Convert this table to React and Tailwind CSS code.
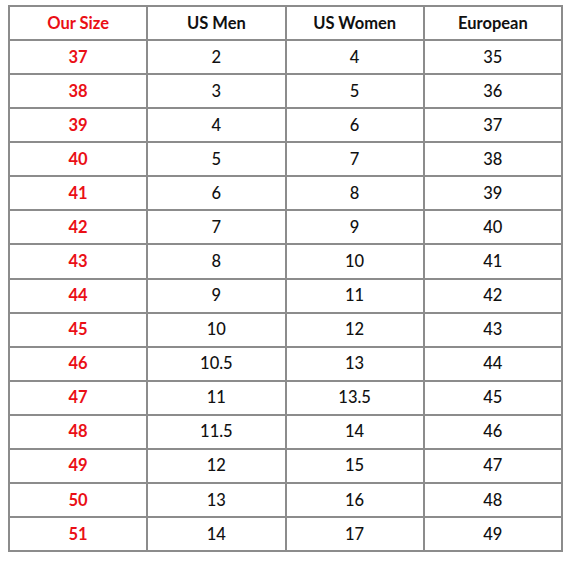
import React from 'react';

const rows = [
    ['37', '2', '4', '35'],
    ['38', '3', '5', '36'],
    ['39', '4', '6', '37'],
    ['40', '5', '7', '38'],
    ['41', '6', '8', '39'],
    ['42', '7', '9', '40'],
    ['43', '8', '10', '41'],
    ['44', '9', '11', '42'],
    ['45', '10', '12', '43'],
    ['46', '10.5', '13', '44'],
    ['47', '11', '13.5', '45'],
    ['48', '11.5', '14', '46'],
    ['49', '12', '15', '47'],
    ['50', '13', '16', '48'],
    ['51', '14', '17', '49'],
];

const headers = ['Our Size', 'US Men', 'US Women', 'European'];

const App = () => {
    return (
        <div className="w-[570px] h-[562px] bg-white pl-[8px] pt-[5px]" style={{ fontFamily: 'Lato, "Open Sans", sans-serif' }}>
            {/* size chart grid: gray bg shows through the gaps as lines */}
            <div className="w-[555px] h-[547px] bg-[#8c8c8c] p-[2px] grid grid-cols-4 grid-rows-[repeat(16,1fr)] gap-[2px]">
                {headers.map((h, i) => (
                    <div
                        key={h}
                        className={`bg-white flex items-center justify-center text-[16.5px] font-bold ${i === 0 ? 'text-[#ea0f16]' : 'text-[#111]'}`}
                    >
                        {h}
                    </div>
                ))}
                {rows.map((row) =>
                    row.map((cell, i) => (
                        <div
                            key={row[0] + '-' + i}
                            className={`bg-white flex items-center justify-center text-[16.5px] ${i === 0 ? 'text-[#ea0f16] font-bold' : 'text-[#111] font-medium'}`}
                        >
                            {cell}
                        </div>
                    ))
                )}
            </div>
        </div>
    );
};

export default App;
